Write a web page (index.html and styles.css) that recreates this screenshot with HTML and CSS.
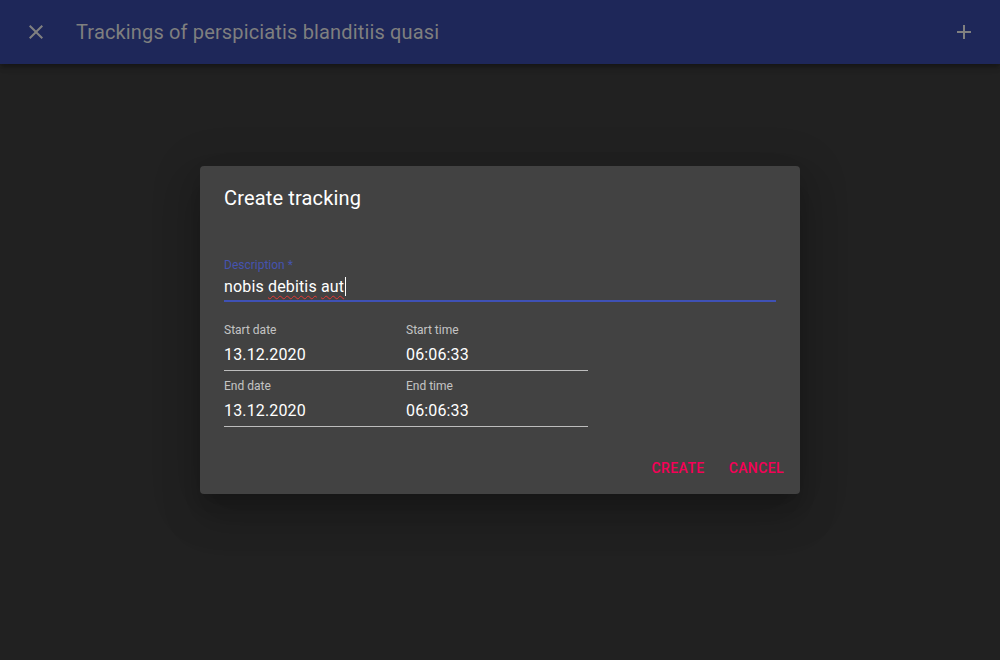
FILE: index.html
```html
<!DOCTYPE html>
<html>
<head>
<meta charset="utf-8">
<link rel="stylesheet" href="styles.css">
</head>
<body>
<header class="appbar">
  <div class="icon-btn">
    <svg width="24" height="24" viewBox="0 0 24 24"><path fill="currentColor" d="M19 6.41L17.59 5 12 10.59 6.41 5 5 6.41 10.59 12 5 17.59 6.41 19 12 13.41 17.59 19 19 17.59 13.41 12z"/></svg>
  </div>
  <h1 class="appbar-title">Trackings of perspiciatis blanditiis quasi</h1>
  <div class="icon-btn right">
    <svg width="24" height="24" viewBox="0 0 24 24"><path fill="currentColor" d="M19 13h-6v6h-2v-6H5v-2h6V5h2v6h6v2z"/></svg>
  </div>
</header>
<main class="content"></main>
<div class="backdrop">
  <div class="dialog">
    <h2 class="dialog-title">Create tracking</h2>
    <div class="dialog-content">
      <div class="field focused">
        <label class="label">Description *</label>
        <div class="value">nobis <span class="spell">debitis</span> <span class="spell">aut</span><span class="caret"></span></div>
      </div>
      <div class="grid">
        <div class="field">
          <label class="label">Start date</label>
          <div class="value">13.12.2020</div>
        </div>
        <div class="field">
          <label class="label">Start time</label>
          <div class="value">06:06:33</div>
        </div>
        <div class="field">
          <label class="label">End date</label>
          <div class="value">13.12.2020</div>
        </div>
        <div class="field">
          <label class="label">End time</label>
          <div class="value">06:06:33</div>
        </div>
      </div>
    </div>
    <div class="dialog-actions">
      <button class="btn">Create</button>
      <button class="btn">Cancel</button>
    </div>
  </div>
</div>
</body>
</html>
```
FILE: styles.css
```css
* { box-sizing: border-box; }
html, body { margin: 0; padding: 0; }
body {
  width: 1000px;
  height: 660px;
  background: #212121;
  font-family: Roboto, "Liberation Sans", sans-serif;
  overflow: hidden;
  position: relative;
}
.appbar {
  height: 64px;
  background: #1e2759;
  display: flex;
  align-items: center;
  padding: 0 12px;
  color: #7f7f7f;
  box-shadow: 0 2px 4px -1px rgba(0,0,0,0.2), 0 4px 5px 0 rgba(0,0,0,0.14), 0 1px 10px 0 rgba(0,0,0,0.12);
}
.icon-btn {
  width: 48px;
  height: 48px;
  display: flex;
  align-items: center;
  justify-content: center;
  color: #808080;
}
.icon-btn.right { margin-left: auto; }
.appbar-title {
  margin: 0 0 0 16px;
  font-size: 20px;
  font-weight: 400;
  letter-spacing: 0.0075em;
  color: #7f7f7f;
}
.backdrop {
  position: absolute;
  inset: 0;
  display: flex;
  align-items: center;
  justify-content: center;
}
.dialog {
  width: 600px;
  height: 328px;
  background: #424242;
  border-radius: 4px;
  box-shadow: 0 11px 15px -7px rgba(0,0,0,0.2), 0 24px 38px 3px rgba(0,0,0,0.14), 0 9px 46px 8px rgba(0,0,0,0.12);
  display: flex;
  flex-direction: column;
  color: #fff;
}
.dialog-title {
  margin: 0;
  padding: 16px 24px;
  font-size: 20px;
  font-weight: 400;
  line-height: 32px;
  letter-spacing: 0.0075em;
}
.dialog-content {
  padding: 29px 24px 0;
  display: flex;
  flex-direction: column;
}
.field {
  display: flex;
  flex-direction: column;
  border-bottom: 1px solid #bdbdbd;
  padding-bottom: 6px;
}
.label {
  font-size: 12px;
  line-height: 12px;
  color: rgba(255,255,255,0.7);
  margin-bottom: 9px;
}
.value {
  font-size: 16px;
  line-height: 19px;
  color: #fff;
  letter-spacing: 0.00938em;
}
.field.focused {
  border-bottom: 2px solid #3f51b5;
  padding-bottom: 4px;
  margin-bottom: 22px;
}
.field.focused .label {
  color: #4553b0;
  margin-bottom: 6px;
}
.spell {
  text-decoration: underline wavy #e53935;
  text-decoration-thickness: 1px;
  text-underline-offset: 3px;
}
.caret {
  display: inline-block;
  width: 1px;
  height: 19px;
  background: #fff;
  vertical-align: top;
  margin-left: 1px;
}
.grid {
  display: grid;
  grid-template-columns: 182px 182px;
  row-gap: 9px;
}
.dialog-actions {
  margin-top: auto;
  padding: 8px;
  display: flex;
  justify-content: flex-end;
  gap: 8px;
}
.btn {
  min-width: 64px;
  height: 36px;
  padding: 6px 8px;
  background: transparent;
  border: none;
  color: #f50057;
  font-family: Roboto, "Liberation Sans", sans-serif;
  font-size: 14px;
  font-weight: 500;
  letter-spacing: 0.02857em;
  text-transform: uppercase;
  line-height: 24px;
  cursor: pointer;
}
```
